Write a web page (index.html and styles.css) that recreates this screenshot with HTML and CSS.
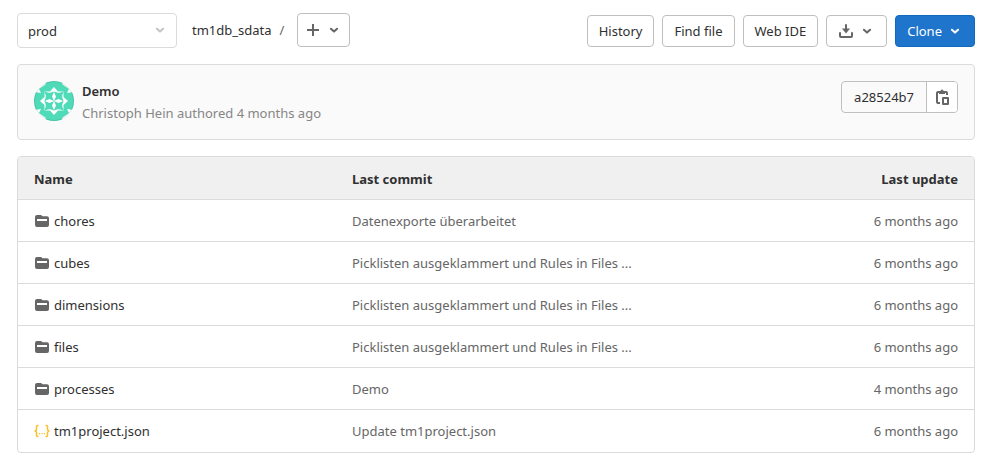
FILE: index.html
```html
<!DOCTYPE html>
<html lang="en">
<head>
<meta charset="utf-8">
<title>tm1db_sdata</title>
<link rel="stylesheet" href="styles.css">
</head>
<body>
<svg class="sprite" aria-hidden="true">
  <symbol id="chevron" viewBox="0 0 16 16"><path d="M4.900 6.700 8 9.600l3.100-2.900" fill="none" stroke="currentColor" stroke-width="2" stroke-linecap="round" stroke-linejoin="round"/></symbol>
  <symbol id="folder" viewBox="0 0 16 16"><path fill="currentColor" fill-rule="evenodd" d="M3 2h3.500a2 2 0 0 1 1.600.800L8.500 3.300H13a2 2 0 0 1 2 2V12a2 2 0 0 1-2 2H3a2 2 0 0 1-2-2V4a2 2 0 0 1 2-2zM3 6v2h10V6z"/></symbol>
</svg>
<main class="page">
  <header class="toolbar">
    <div class="select-wrap">
      <select class="branch" aria-label="Branch"><option>prod</option></select>
      <svg class="icon select-icon"><use href="#chevron"/></svg>
    </div>
    <nav class="crumbs" aria-label="Path"><a href="#">tm1db_sdata</a><span class="slash">/</span></nav>
    <button class="btn add" aria-label="Add to tree">
      <svg class="icon" viewBox="0 0 16 16"><path d="M8 2v12M2 8h12" stroke="currentColor" stroke-width="2"/></svg>
      <svg class="icon"><use href="#chevron"/></svg>
    </button>
    <div class="actions">
      <button class="btn">History</button>
      <button class="btn">Find file</button>
      <button class="btn">Web IDE</button>
      <button class="btn" aria-label="Download">
        <svg class="icon" viewBox="0 0 16 16"><path d="M2 10v3a1 1 0 0 0 1 1h10a1 1 0 0 0 1-1v-3M8 2v6" fill="none" stroke="currentColor" stroke-width="2" stroke-linecap="round"/><path d="M4 5.500h8L8 10.500z" fill="currentColor"/></svg>
        <svg class="icon"><use href="#chevron"/></svg>
      </button>
      <button class="btn primary">Clone <svg class="icon"><use href="#chevron"/></svg></button>
    </div>
  </header>

  <section class="commit">
    <svg class="avatar" viewBox="0 0 40 40" role="img" aria-label="Christoph Hein">
      <defs>
        <clipPath id="round"><circle cx="20" cy="20" r="20"/></clipPath>
        <path id="star" d="M-4-4Q0-1.500 4-4 1.500 0 4 4 0 1.500-4 4-1.500 0-4-4z"/>
      </defs>
      <g clip-path="url(#round)">
        <path fill="#fff" d="M0 0h40v40H0z"/>
        <path fill="#4fdab8" d="M11 0h18l-1 3 7 5-2 4 7-1v18l-7-1 2 4-7 5 1 3H11l1-3-7-5 2-4-7 1V11l7 1-2-4 7-5z"/>
        <path fill="#fff" d="M20 6l4 4.500 5.500 0v5.500L34 20l-4.500 4v5.500H24L20 34l-4-4.500h-5.500V24L6 20l4.500-4v-5.500H16z"/>
        <g fill="#4fdab8" stroke="#4fdab8" stroke-width="1.500" stroke-linejoin="round">
          <use href="#star" x="15.300" y="15.300"/><use href="#star" x="24.700" y="15.300"/>
          <use href="#star" x="15.300" y="24.700"/><use href="#star" x="24.700" y="24.700"/>
        </g>
        <path fill="#fff" d="M20 11l2 4.500-2 4.500 4.500-2 4.500 2-4.500 2-4.500-2 2 4.500-2 4.500-2-4.500 2-4.500-4.500 2-4.500-2 4.500-2 4.500 2-2-4.500z"/>
      </g>
      <circle cx="20" cy="20" r="19.500" fill="none" stroke="#000" stroke-opacity=".1"/>
    </svg>
    <div class="info">
      <a class="title" href="#">Demo</a>
      <p class="byline">Christoph Hein authored 4 months ago</p>
    </div>
    <div class="sha">
      <span class="hash">a28524b7</span>
      <button class="copy" aria-label="Copy commit SHA"><svg class="icon" viewBox="0 0 16 16"><path d="M6 14H4a1 1 0 0 1-1-1V4a1 1 0 0 1 1-1h8a1 1 0 0 1 1 1v2" fill="none" stroke="currentColor" stroke-width="2"/><path d="M5 5V2h1.500a1.500 1.500 0 0 1 3 0H11v3z" fill="currentColor"/><path d="M9 9h5v6H9z" fill="none" stroke="currentColor" stroke-width="2" stroke-linejoin="round"/></svg></button>
    </div>
  </section>

  <div class="tree">
    <table>
      <thead><tr><th class="name">Name</th><th>Last commit</th><th class="date">Last update</th></tr></thead>
      <tbody>
        <tr><td><a href="#"><svg class="icon"><use href="#folder"/></svg>chores</a></td><td>Datenexporte überarbeitet</td><td class="date">6 months ago</td></tr>
        <tr><td><a href="#"><svg class="icon"><use href="#folder"/></svg>cubes</a></td><td>Picklisten ausgeklammert und Rules in Files ...</td><td class="date">6 months ago</td></tr>
        <tr><td><a href="#"><svg class="icon"><use href="#folder"/></svg>dimensions</a></td><td>Picklisten ausgeklammert und Rules in Files ...</td><td class="date">6 months ago</td></tr>
        <tr><td><a href="#"><svg class="icon"><use href="#folder"/></svg>files</a></td><td>Picklisten ausgeklammert und Rules in Files ...</td><td class="date">6 months ago</td></tr>
        <tr><td><a href="#"><svg class="icon"><use href="#folder"/></svg>processes</a></td><td>Demo</td><td class="date">4 months ago</td></tr>
        <tr><td><a href="#"><svg class="icon json" viewBox="0 0 16 16"><path d="M4.500 2.500h-1Q2.500 2.500 2.500 3.500V6Q2.500 8 .5 8q2 0 2 2v2.500q0 1 1 1h1M11.500 2.500h1q1 0 1 1V6q0 2 2 2-2 0-2 2v2.500q0 1-1 1h-1" fill="none" stroke="currentColor" stroke-width="1.500"/><path d="M5 10h1.200v1.200H5zM7.400 10h1.200v1.200H7.400zM9.800 10H11v1.200H9.800z" fill="currentColor"/></svg>tm1project.json</a></td><td>Update tm1project.json</td><td class="date">6 months ago</td></tr>
      </tbody>
    </table>
  </div>
</main>
</body>
</html>
```
FILE: styles.css
```css
* { box-sizing: border-box; }
body {
  margin: 0;
  background: #fff;
  color: #303030;
  font: 13px/20px "Noto Sans", "Open Sans", sans-serif;
}
a { color: inherit; text-decoration: none; }
button, select { font: inherit; color: inherit; }
.sprite { position: absolute; width: 0; height: 0; }
.page { padding: 13px 18px 12px 17px; }
.icon { width: 16px; height: 16px; flex: none; color: #666; }

.toolbar { display: flex; align-items: flex-start; margin-bottom: 16px; }
.select-wrap { position: relative; width: 160px; }
.branch {
  appearance: none;
  display: block;
  width: 100%;
  height: 35px;
  padding: 0 10px;
  border: 1px solid #dbdbdb;
  border-radius: 4px;
  background: #fff;
}
.select-icon { position: absolute; right: 9px; top: 9px; color: #c4c4c4; pointer-events: none; }
.crumbs { display: flex; gap: 8px; margin: 7px 13px 0 15px; }
.slash { color: #666; }
.btn {
  display: flex;
  align-items: center;
  gap: 5px;
  height: 32px;
  padding: 0 11px;
  border: 1px solid #bfbfbf;
  border-radius: 4px;
  background: #fff;
  white-space: nowrap;
}
.add { height: 34px; padding: 0 7px; }
.actions { display: flex; gap: 8px; margin: 2px 0 0 auto; }
.primary { background: #1f75cb; border-color: #1068bf; color: #fff; }
.primary .icon { color: #fff; }

.commit {
  display: flex;
  align-items: flex-start;
  padding: 16px;
  border: 1px solid #dbdbdb;
  border-radius: 4px;
  background: #fafafa;
  margin-bottom: 16px;
}
.avatar { width: 40px; height: 40px; }
.info { flex: 1; margin-left: 8px; }
.title { display: block; font-weight: 600; }
.byline { margin: 2px 0 0; color: #868686; }
.sha { display: flex; height: 32px; border: 1px solid #bfbfbf; border-radius: 4px; overflow: hidden; }
.hash { padding: 5px 12px; }
.copy {
  display: flex;
  align-items: center;
  padding: 0 7px;
  border: 0;
  border-left: 1px solid #bfbfbf;
  background: #fff;
}

.tree { border: 1px solid #dbdbdb; border-radius: 4px; overflow: hidden; }
table { width: 100%; border-spacing: 0; table-layout: fixed; }
th, td { height: 42px; padding: 0 16px; text-align: left; color: #666; }
td { border-top: 1px solid #dbdbdb; }
tbody tr:last-child td { height: 43px; }
th { padding-top: 2px; background: #f0f0f0; color: #303030; font-weight: 700; }
.name { width: 318px; }
.date { width: 25%; text-align: right; }
td a { display: flex; align-items: center; gap: 4px; color: #303030; }
.json { color: #fbc02d; }
```
